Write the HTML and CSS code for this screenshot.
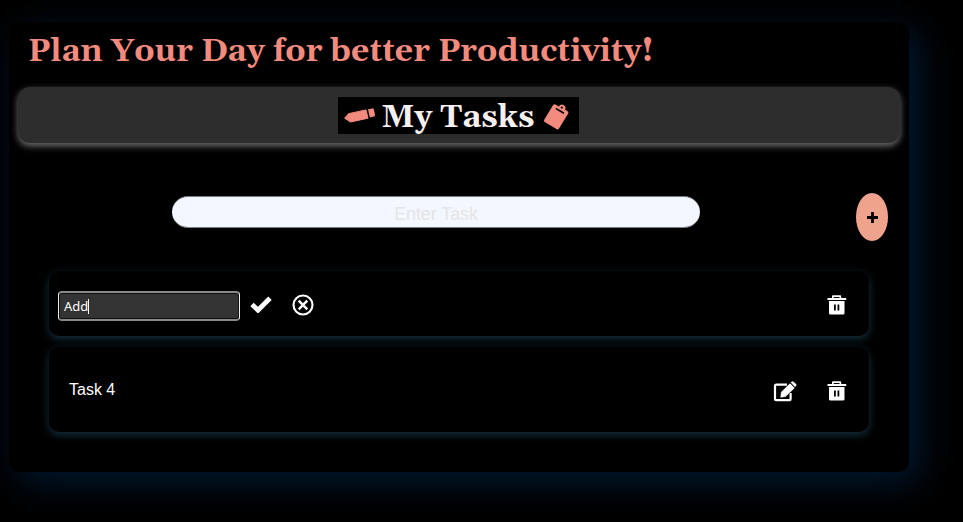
FILE: index.html
```html
<!DOCTYPE html>
<html lang="en">
<head>
<meta charset="utf-8">
<title>My Tasks</title>
<link rel="stylesheet" href="styles.css">
</head>
<body>
<main class="planner">
  <h1 class="headline">Plan Your Day for better Productivity!</h1>
  <header class="banner">
    <h2 class="banner-title">
      <svg class="pencil" width="32" height="18" viewBox="0 0 32 18"><path fill="#f28b7d" d="M.6 10.200 4.500 5.700 22 1.900 24 10.200 6.500 14Z" stroke="#f28b7d" stroke-linejoin="round"/><path fill="#f28b7d" d="M24 1.300 28.300.4Q29.500.2 29.900 1.500L31 6.800Q31.200 8.200 30 8.600L25.900 9.600Z"/></svg>
      <span class="banner-text">My Tasks</span>
      <svg class="board" width="26" height="27" viewBox="0 0 26 27"><path fill="#f28b7d" d="M12.300 1.500 16 3.400A3.200 3.200 0 0 1 22 6.600L24.600 8.300Q26 9.200 25.200 10.500L16 25.500Q15 27 13.500 26.100L1.700 18.900Q.4 18 1.200 16.700L10 2.300Q10.900.9 12.300 1.500Z"/><circle cx="18.800" cy="4.600" r="1.100" fill="#000"/><path d="m12.700 5.400 8.200 4.800" stroke="#000" stroke-width="1.600"/></svg>
    </h2>
  </header>
  <form class="entry">
    <input class="entry-input" type="text" placeholder="Enter Task">
    <button class="entry-add" type="button" aria-label="Add"><svg width="12" height="12" viewBox="0 0 12 12"><path d="M6.500 1v11M1 6.500h11" stroke="#000" stroke-width="2.800"/></svg></button>
  </form>
  <section class="tasks">
    <article class="task editing">
      <div class="edit-field">Add<span class="caret"></span></div>
      <svg class="check" width="22" height="17" viewBox="0 0 22 17"><path d="m2 8.500 6 5.700L20 2.300" fill="none" stroke="#fff" stroke-width="4.800"/></svg>
      <svg class="cancel" width="22" height="22" viewBox="0 0 22 22"><g fill="none" stroke="#fff"><circle cx="11" cy="11" r="9.500" stroke-width="2.100"/><path d="m6.700 6.700 8.600 8.600M15.300 6.700l-8.600 8.600" stroke-width="2.500"/></g></svg>
      <svg class="trash" width="20" height="20" viewBox="0 0 20 20"><path fill="#fff" fill-rule="evenodd" d="M5 3V1.300Q5 .3 6 .3h7.200q1 0 1 1V3h5v2H.5V3ZM6.700 3h5.800V1.900H6.700ZM2 6h15.500v12q0 1.500-1.500 1.500H3.500Q2 19.500 2 18ZM7 9.500v6h1.800v-6Zm3.500 0v6h1.800v-6Z"/></svg>
    </article>
    <article class="task">
      <span class="task-name">Task 4</span>
      <svg class="edit" width="24" height="21" viewBox="0 0 24 21"><path d="M14 3.600H3.300Q2 3.600 2 4.900v13Q2 19.200 3.300 19.200h13Q17.600 19.200 17.600 17.900V12" fill="none" stroke="#fff" stroke-width="2.200"/><path fill="#fff" stroke="#000" stroke-width=".6" d="m17 2 5 5L12.600 16 7 17 7.800 11Z"/><path fill="#fff" d="m17.700 1.500.8-.8q1-1 2.100 0L23 3q1 1 0 2.100l-1 1Z"/></svg>
      <svg class="trash" width="20" height="20" viewBox="0 0 20 20"><path fill="#fff" fill-rule="evenodd" d="M5 3V1.300Q5 .3 6 .3h7.200q1 0 1 1V3h5v2H.5V3ZM6.700 3h5.800V1.900H6.700ZM2 6h15.500v12q0 1.500-1.500 1.500H3.500Q2 19.500 2 18ZM7 9.500v6h1.800v-6Zm3.500 0v6h1.800v-6Z"/></svg>
    </article>
  </section>
</main>
</body>
</html>
```
FILE: styles.css
```css
* { box-sizing: border-box; }
body {
  margin: 0;
  padding: 22px 0 0 9px;
  height: 522px;
  overflow: hidden;
  background: #000;
  color: #fff;
  font-family: "Liberation Sans", Arial, sans-serif;
}
svg { display: block; flex: none; }
.planner {
  width: 900px;
  height: 450px;
  padding: 0 9px;
  border-radius: 10px;
  background: #000;
  box-shadow: 10px 10px 36px #001a33;
}
.headline, .banner-title {
  margin: 0;
  font-family: Georgia, Gelasio, "DejaVu Serif", serif;
  font-size: 32px;
  font-weight: bold;
  line-height: 36px;
  white-space: nowrap;
}
.headline {
  height: 65px;
  padding: 12px 0 0 10px;
  color: #f28b7d;
}
.banner {
  display: flex;
  justify-content: center;
  width: 882px;
  height: 56px;
  padding: 10px 2px 0 0;
  border-radius: 12px;
  background: #2d2d2d;
  box-shadow: 0 3px 7px #707070;
}
.banner-title {
  display: flex;
  align-items: center;
  width: 241px;
  height: 37px;
  padding-left: 6px;
  background: #000;
}
.banner-text {
  width: 154px;
  margin: 5px 7px 0 6px;
  color: #f8f0f0;
}
.entry {
  display: flex;
  align-items: flex-start;
  margin: 50px 12px 0 154px;
  justify-content: space-between;
}
.entry-input {
  width: 528px;
  height: 32px;
  margin-top: 3px;
  padding: 4px 0 0;
  border: 1px solid #777b82;
  border-width: 1px 0;
  border-radius: 16px;
  background: #f3f7ff;
  font: 17.8px "Liberation Sans", Arial, sans-serif;
  text-align: center;
}
.entry-input::placeholder { color: #e5e5e5; opacity: 1; }
.entry-add {
  display: grid;
  place-items: center;
  width: 32px;
  height: 48px;
  padding: 0;
  border: 0;
  border-radius: 50%;
  background: #f0a38c;
}
.tasks {
  display: grid;
  gap: 11px;
  margin: 30px 31px 0;
}
.task {
  display: flex;
  align-items: center;
  height: 85px;
  padding: 0 22px 0 20px;
  border-radius: 10px;
  background: #000;
  box-shadow: 0 3px 8px #14303e;
}
.editing {
  height: 65px;
  padding-left: 9px;
}
.task-name { font-size: 16px; }
.edit-field {
  display: flex;
  align-items: center;
  width: 182px;
  height: 30px;
  margin-top: 5px;
  padding-left: 5px;
  border: 1px solid #eee;
  border-width: 2px 1px;
  border-color: #888 #eee;
  border-radius: 4px;
  background: #333;
  box-shadow: inset 0 0 0 1px #111;
  font-family: "Noto Sans", "Open Sans", sans-serif;
  font-size: 13px;
}
.caret {
  width: 1px;
  height: 15px;
  background: #fff;
}
.check { margin: 2px 0 0 10px; }
.cancel { margin: 3px 0 0 20px; }
.trash { margin: 3px 0 0 auto; }
.edit { margin: 3px 0 0 auto; }
.edit + .trash { margin-left: 30px; }
.pencil { margin-top: 2px; }
.board { margin-top: 2px; }
```
